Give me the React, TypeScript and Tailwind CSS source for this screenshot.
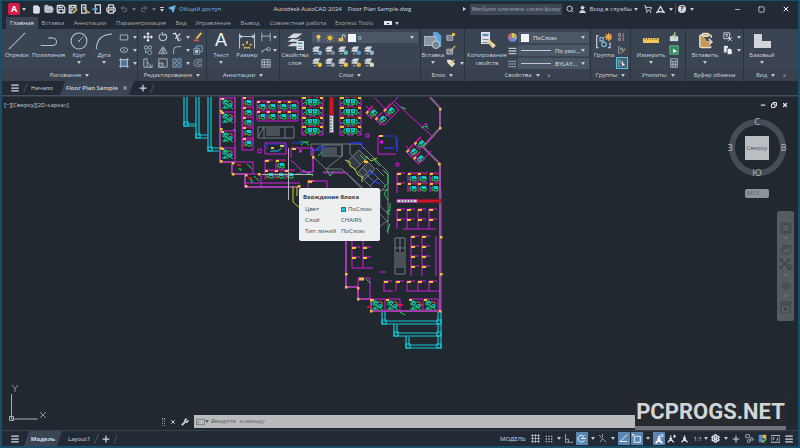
import type { ReactNode } from "react";
import {
  ClipboardPaste,
  FilePlus,
  FolderOpen,
  Menu,
  Minus,
  Plus,
  Printer,
  Redo2,
  Save,
  Search,
  Send,
  Settings,
  ShoppingCart,
  Square,
  Undo2,
  User,
  Wrench,
  X,
} from "lucide-react";

const M = "#d61be0";
const G = "#16d45b";
const C = "#12c8d8";
const Y = "#f2c230";
const R = "#d01424";
const GR = "#727a82";
const B = "#2438d8";

function Caret({ className = "" }: { className?: string }) {
  return (
    <svg viewBox="0 0 4 3" className={`h-[3px] w-1 shrink-0 fill-[#c3c9d1] ${className}`}>
      <path d="M0 0h4L2 3z" />
    </svg>
  );
}

function Glyph({ children, className = "h-3 w-3" }: { children: ReactNode; className?: string }) {
  return (
    <svg viewBox="0 0 12 12" className={`shrink-0 ${className}`} fill="none" stroke="#b9c2cc" strokeWidth="1">
      {children}
    </svg>
  );
}

function Tool({ label, children, className = "" }: { label: string; children: ReactNode; className?: string }) {
  return (
    <button type="button" aria-label={label} className={`flex items-center justify-center ${className}`}>
      {children}
    </button>
  );
}

function BigTool({
  icon,
  label,
  caret = true,
  className,
}: {
  icon: ReactNode;
  label: ReactNode;
  caret?: boolean;
  className: string;
}) {
  return (
    <button type="button" className={`flex shrink-0 flex-col items-center pt-0.5 leading-2 ${className}`}>
      <span className="flex h-[19px] items-center justify-center">{icon}</span>
      <span className="mt-px whitespace-nowrap">{label}</span>
      {caret && <Caret className="mt-0.5" />}
    </button>
  );
}

function Panel({
  title,
  className,
  arrow = true,
  more = false,
  children,
}: {
  title: string;
  className: string;
  arrow?: boolean;
  more?: boolean;
  children: ReactNode;
}) {
  return (
    <section className={`flex flex-col border-r border-[#2a323e] bg-[#3b4453] ${className}`}>
      <div className="flex h-10 items-start">{children}</div>
      <div className="flex h-3 items-center justify-center gap-1 bg-[#39414f] leading-2">
        <span className="whitespace-nowrap">{title}</span>
        {arrow && <Caret />}
        {more && <span className="pl-1">»</span>}
      </div>
    </section>
  );
}

/* ---------- title bar ---------- */

function TitleBar() {
  return (
    <header className="flex h-4 items-center bg-[#222a35] pl-1.5">
      <button type="button" aria-label="Меню приложения" className="flex items-center gap-0.5">
        <span className="flex h-3 w-3 items-center justify-center rounded-xs bg-[#d81b4a] text-[9px] font-bold text-white">
          A
        </span>
        <Caret />
      </button>
      <div className="ml-1.5 flex items-center gap-0.5 text-[#d9dde2]">
        <Tool label="Создать"><FilePlus className="h-[9px] w-[9px] fill-[#d9dde2]" /></Tool>
        <Tool label="Открыть" className="ml-px"><FolderOpen className="h-2.5 w-2.5 fill-[#aeb6c0]" /></Tool>
        <Tool label="Сохранить"><Save className="h-2.5 w-2.5" strokeWidth={3} /></Tool>
        <Tool label="Сохранить как">
          <Glyph className="h-2.5 w-2.5">
            <path d="M1.500 1.500h8v5M1.500 1.500v9h4M3.500 1.500v3h4v-3M3.500 10V7h3" stroke="#d9dde2" strokeWidth="1.500" />
            <path d="M6 11l5-5" stroke="#e8b35c" strokeWidth="2" />
          </Glyph>
        </Tool>
        <Tool label="Открыть из облака">
          <Glyph className="h-2.5 w-2.5">
            <path d="M2 1h5v10H2zM4 4h2M4 6h3" stroke="#d9dde2" strokeWidth="1.500" />
            <path d="M6 10h6M8 7v4" stroke="#c8a96b" strokeWidth="2" />
          </Glyph>
        </Tool>
        <Tool label="Сохранить в облако">
          <Glyph className="h-2.5 w-2.5">
            <path d="M4 1h6v10H4z" stroke="#d9dde2" strokeWidth="1.500" />
            <path d="M0 6h6M4 4l2 2-2 2" stroke="#5fb2e8" strokeWidth="1.500" />
          </Glyph>
        </Tool>
        <Tool label="Печать" className="ml-0.5"><Printer className="h-2.5 w-2.5" strokeWidth={3} /></Tool>
      </div>
      <div className="ml-1 flex items-center gap-1 text-[#69727e]">
        <Tool label="Отменить"><Undo2 className="h-2 w-2" strokeWidth={3} /></Tool>
        <Caret className="opacity-50" />
        <Tool label="Повторить"><Redo2 className="h-2 w-2" strokeWidth={3} /></Tool>
        <Caret className="opacity-50" />
        <span className="flex flex-col items-center gap-px">
          <span className="h-px w-1 bg-[#c3c9d1]" />
          <Caret />
        </span>
      </div>
      <button type="button" className="ml-1 flex items-center gap-[3px] text-[#6fb8ea]">
        <Send className="h-2 w-2 fill-[#6fb8ea]" />
        Общий доступ
      </button>
      <h1 className="ml-auto flex gap-1.5 text-[#d5dae0]">
        <span>Autodesk AutoCAD 2024</span>
        <span>Floor Plan Sample.dwg</span>
      </h1>
      <div className="ml-auto flex items-center">
        <svg viewBox="0 0 3 4" className="mr-1 h-1 w-[3px] fill-[#d5dae0]"><path d="M0 0v4l3-2z" /></svg>
        <input
          aria-label="Поиск"
          placeholder="Введите ключевое слово/фразу"
          className="h-[11px] w-[92px] bg-[#3d4654] px-px italic placeholder:text-[#98a1ad]"
        />
        <Tool label="Найти" className="ml-1"><Search className="h-2 w-2 text-[#c3c9d1]" strokeWidth={3} /></Tool>
        <button type="button" className="ml-1 flex items-center gap-0.5 text-[#d5dae0]">
          <User className="h-[9px] w-[9px] fill-[#d5dae0]" />
          Вход в службы
          <Caret />
        </button>
        <Tool label="Магазин приложений" className="ml-1.5"><ShoppingCart className="h-2 w-2 text-[#c3c9d1]" strokeWidth={3} /></Tool>
        <Tool label="Autodesk" className="ml-1 gap-1">
          <Glyph className="h-[9px] w-[9px]"><path d="M6 2L2 9h8zM0 10l4-1M12 10l-4-1" stroke="#d5dae0" strokeWidth="1.800" /></Glyph>
          <Caret />
        </Tool>
        <span className="mx-0.5 h-2.5 w-px bg-[#4a5361]" />
        <Tool label="Справка" className="gap-1">
          <span className="flex h-2 w-2 items-center justify-center rounded-full bg-[#d5dae0] text-[7px] font-bold text-[#222a35]">?</span>
          <Caret />
        </Tool>
        <div className="ml-8 flex text-[#c3c9d1]">
          <Tool label="Свернуть" className="w-6"><Minus className="h-[7px] w-[7px]" strokeWidth={3} /></Tool>
          <Tool label="Развернуть" className="w-6"><Square className="h-[7px] w-[7px]" strokeWidth={3} /></Tool>
          <Tool label="Закрыть" className="w-6"><X className="h-2 w-2 text-white" strokeWidth={3} /></Tool>
        </div>
      </div>
    </header>
  );
}

const TABS = [
  { name: "Вставка", cls: "w-[30px]" },
  { name: "Аннотации", cls: "w-11" },
  { name: "Параметризация", cls: "w-[58px]" },
  { name: "Вид", cls: "w-[22px]" },
  { name: "Управление", cls: "w-[42px]" },
  { name: "Вывод", cls: "w-8" },
  { name: "Совместная работа", cls: "w-16" },
  { name: "Express Tools", cls: "w-12" },
];

function RibbonTabs() {
  return (
    <nav className="flex h-3 items-center bg-[#222a35] pl-1 text-[#a3acb8]">
      <button type="button" className="flex h-full w-8 items-center justify-center bg-[#3b4453] text-[#e1e5ea]">
        Главная
      </button>
      {TABS.map((t) => (
        <button key={t.name} type="button" className={`whitespace-nowrap ${t.cls}`}>
          {t.name}
        </button>
      ))}
      <Tool label="Вид ленты" className="ml-1.5 gap-[3px]">
        <span className="flex h-1 w-2 items-center justify-center bg-[#e1e5ea]">
          <span className="h-px w-0.5 bg-[#222a35]" />
        </span>
        <Caret />
      </Tool>
    </nav>
  );
}

/* ---------- ribbon ---------- */

const STEEL = "#7fb2d6";

const DRAW_SMALL = [
  { name: "Прямоугольник", el: <path d="M1.500 3.500h9v6h-9z" /> },
  { name: "Эллипс", el: <><ellipse cx="6" cy="6" rx="4.500" ry="2.800" /><path d="M5 6h2" /></> },
  { name: "Штриховка", el: <><path d="M2 2h8v8H2z" fill="#4c7396" stroke={STEEL} /><path d="M0 2h12M0 10h12M2 0v12M10 0v12" /></> },
];

const EDIT_SMALL = [
  { name: "Перенести", el: <path d="M6 1v10M1 6h10M4.500 2.500L6 1l1.500 1.500M4.500 9.500L6 11l1.500-1.500M2.500 4.500L1 6l1.500 1.500M9.500 4.500L11 6 9.500 7.500" stroke="#e4e8ec" strokeWidth="1.300" /> },
  { name: "Повернуть", el: <path d="M9 2.500A4.500 4.500 0 1 1 4 2M7 0v3.500H3.500" strokeWidth="1.400" transform="matrix(-1 0 0 1 12 0)" /> },
  { name: "Обрезать", caret: true, el: <><path d="M4 1l4 10M10 2L4 8M1 2h4" stroke="#dfe3e8" strokeWidth="1.400" /><circle cx="9" cy="9" r="1.500" /></> },
  { name: "Стереть", el: <><path d="M4 8l6-7" stroke="#f0b552" strokeWidth="2.500" /><path d="M1 10h6" stroke="#e05a5a" strokeWidth="2" /></> },
  { name: "Копировать", el: <><circle cx="3.500" cy="3" r="2" /><circle cx="8.500" cy="3" r="2" /><circle cx="8" cy="9" r="2.500" stroke={STEEL} /><path d="M3 6v3h2" /></> },
  { name: "Зеркало", el: <><path d="M5 3v7H1zM7 3v7h4z" /><path d="M6 1v11" stroke={STEEL} /></> },
  { name: "Сопряжение", caret: true, el: <path d="M2 11V6a4 4 0 0 1 4-4h5" /> },
  { name: "Расчленить", el: <><path d="M1 4h7v7H1zM4 4V1h7v7H8" stroke={STEEL} /><path d="M3 6h3v3H3z" fill="#b9c2cc" /></> },
  { name: "Растянуть", el: <><path d="M1 1v10h4V1zM5 5l6 6H5" /><path d="M7 11h4V8" stroke={STEEL} /></> },
  { name: "Масштаб", el: <><path d="M1 1h10v10H1z" /><path d="M1 6h5v5H1z" fill="#55606e" /></> },
  { name: "Массив", caret: true, el: <path d="M1 1h4v4H1zM7 1h4v4H7zM1 7h4v4H1zM7 7h4v4H7z" stroke={STEEL} /> },
  { name: "Смещение", el: <path d="M11 2H5a4 4 0 0 0 0 8h6M11 4.500H6a1.500 1.500 0 0 0 0 3h5" stroke="#9aa5b2" /> },
];

const LAYER_MARKS = [STEEL, "#7a8694", "#5bc0c8", "#4f9ed6", "#8fb8d8", Y, "#9aa5b2", Y, "#e0a63c", "#e3d9b0"];

function Stack({ mark }: { mark: string }) {
  return (
    <Glyph className="h-[11px] w-[11px]">
      <path d="M0 4.500l3-3h6l-2 3zM0 7l2-2h6L6 7.500z" fill="#d3d8de" stroke="none" />
      <circle cx="8.500" cy="8.500" r="2.500" fill={mark} stroke="none" />
      <path d="M2 9.500h3" />
    </Glyph>
  );
}

function PropSelect({ label, value, lead }: { label: string; value: string; lead: ReactNode }) {
  return (
    <label className="relative flex h-[11px] items-center gap-1 bg-[#4b5767] pl-[3px]">
      {lead}
      <select aria-label={label} className="min-w-0 flex-1 appearance-none pr-2 text-[#e1e5ea]" defaultValue={value}>
        <option>{value}</option>
      </select>
      <Caret className="pointer-events-none absolute right-1" />
    </label>
  );
}

function Ribbon() {
  return (
    <div className="flex h-[52px] text-[#d0d6dd]">
      <Panel title="Рисование" className="w-[136px]">
        <BigTool
          className="ml-px w-7"
          caret={false}
          label="Отрезок"
          icon={<Glyph className="h-[18px] w-[18px]"><path d="M1 11L11 1" strokeWidth="0.700" /><path d="M.5 11h1M10.500 1h1" stroke={STEEL} /></Glyph>}
        />
        <BigTool
          className="w-[35px]"
          caret={false}
          label="Полилиния"
          icon={<Glyph className="h-[18px] w-[18px]"><path d="M1 9h7.500a2.500 2.500 0 0 0 0-5H7" strokeWidth="0.700" /><path d="M.5 9h1M5.500 4h2" stroke={STEEL} /></Glyph>}
        />
        <BigTool
          className="w-[26px]"
          label="Круг"
          icon={<Glyph className="h-[18px] w-[18px]"><circle cx="6" cy="6" r="5.300" strokeWidth="0.700" /><path d="M6 6l3-3" strokeWidth="0.600" stroke={STEEL} /><path d="M5.500 6h1" /></Glyph>}
        />
        <BigTool
          className="w-6"
          label="Дуга"
          icon={<Glyph className="h-[18px] w-[18px]"><path d="M1 11C1 5 5 1.500 11 1.500" strokeWidth="0.700" /><path d="M.5 11h1M3 4.500h1M10 1.500h1" stroke={STEEL} /></Glyph>}
        />
        <div className="flex flex-col gap-px pt-0.5 pl-[3px]">
          {DRAW_SMALL.map((t) => (
            <Tool key={t.name} label={t.name} className="h-3 gap-1">
              <Glyph className="h-2.5 w-2.5">{t.el}</Glyph>
              <Caret />
            </Tool>
          ))}
        </div>
      </Panel>

      <Panel title="Редактирование" className="w-[69px]">
        <div className="grid grid-cols-[15px_15px_22px_12px] gap-y-px pt-0.5 pl-0.5">
          {EDIT_SMALL.map((t) => (
            <Tool key={t.name} label={t.name} className="h-3 gap-1">
              <Glyph className="h-2.5 w-2.5">{t.el}</Glyph>
              {t.caret && <Caret />}
            </Tool>
          ))}
        </div>
      </Panel>

      <Panel title="Аннотации" className="w-[73px]">
        <BigTool
          className="w-7"
          label="Текст"
          icon={<span className="font-['Liberation_Sans',sans-serif] text-[18px] leading-[17px] text-[#eef1f4]">A</span>}
        />
        <BigTool
          className="w-6"
          caret={false}
          label="Размер"
          icon={
            <Glyph className="h-[18px] w-[18px]">
              <path d="M1 1v10M11 1v10M1 3h10M2.500 2L1 3l1.500 1M9.500 2l1.500 1-1.500 1" strokeWidth="0.700" />
              <path d="M6 8v-2M4 9L3 8M8 9l1-1M6 10v1M4 11l1-1M8 11L7 10" stroke={Y} />
            </Glyph>
          }
        />
        <div className="flex flex-col gap-px pt-0.5 pl-0.5">
          <Tool label="Линейный" className="h-3 gap-0.5">
            <Glyph className="h-2.5 w-2.5"><path d="M1 1v10M11 1v10M1 5h10" /></Glyph><Caret />
          </Tool>
          <Tool label="Выноска" className="h-3 gap-0.5">
            <Glyph className="h-2.5 w-2.5"><path d="M1 9l4-4h3M1 9l1-3" /><circle cx="9" cy="5" r="2" /></Glyph><Caret />
          </Tool>
          <Tool label="Таблица" className="h-3 self-start">
            <Glyph className="h-2.5 w-2.5"><path d="M1 2h10v9H1zM1 5h10M1 8h10M4 2v9M8 2v9" /></Glyph>
          </Tool>
        </div>
      </Panel>

      <Panel title="Слои" className="w-[141px]">
        <BigTool
          className="ml-px w-7"
          caret={false}
          label={<>Свойства<br />слоя</>}
          icon={
            <Glyph className="h-[18px] w-[18px]">
              <path d="M1 4l4-3h6L7 4zM1 6.500l3-2 3 .5 3-1-3 2.500zM1 9.500l3-2h3l2-.5-2 2.500z" fill="#d6dbe0" stroke="none" />
              <path d="M7 6h5v6H7z" fill="#dfe3e8" stroke="none" />
              <path d="M8 7.500h3" stroke="#4a90c8" />
              <path d="M8 9.500h3M8 11h3" stroke="#7b8591" strokeWidth="0.600" />
            </Glyph>
          }
        />
        <div className="flex flex-1 flex-col gap-px pt-[3px] pr-0.5 pl-[3px]">
          <PropSelect
            label="Слой"
            value="0"
            lead={
              <>
                <Glyph className="h-2.5 w-[7px]"><circle cx="6" cy="4" r="3.500" fill="#f3c94b" stroke="none" /><path d="M4 9h4M4.500 11h3" stroke="#e1e5ea" /></Glyph>
                <Glyph className="h-2.5 w-2"><circle cx="6" cy="6" r="3" fill={Y} stroke="none" /><path d="M6 0v12M0 6h12M2 2l8 8M10 2l-8 8" stroke={Y} /></Glyph>
                <Glyph className="h-2.5 w-2"><path d="M1 6h7v5H1z" fill="#f0b94a" stroke="none" /><path d="M6.500 6V3a2 2 0 0 1 4 0v2" stroke="#d5dae0" strokeWidth="1.500" /></Glyph>
                <span className="-mx-0.5 h-2 w-2 bg-[#f2f4f6]" />
              </>
            }
          />
          <div className="grid grid-cols-5 gap-x-0.5 self-start">
            {LAYER_MARKS.map((c, i) => (
              <Tool key={i} label={`Инструмент слоя ${i + 1}`} className="h-3">
                <Stack mark={c} />
              </Tool>
            ))}
          </div>
        </div>
      </Panel>

      <Panel title="Блок" className="w-11">
        <BigTool
          className="w-6"
          label="Вставка"
          icon={
            <Glyph className="h-[18px] w-[18px]">
              <path d="M6 0h3l2.500 2.500V10H6z" fill="#5ba3dc" stroke="none" />
              <path d="M0 3h8v6H0z" fill="#8b95a1" stroke="#cdd3da" strokeWidth="0.500" />
              <circle cx="8" cy="8.500" r="2.500" fill="#76818e" stroke="#cdd3da" strokeWidth="0.600" />
            </Glyph>
          }
        />
        <div className="flex flex-col gap-px pt-0.5 pl-px">
          <Tool label="Создать блок" className="h-3 self-start"><Glyph className="h-2.5 w-2.5"><path d="M1 4h7v6H1z" fill="#77828f" /><circle cx="9" cy="3" r="2" fill={Y} stroke="none" /></Glyph></Tool>
          <Tool label="Редактор блоков" className="h-3 self-start"><Glyph className="h-2.5 w-2.5"><path d="M1 5h7v6H1z" fill="#77828f" /><path d="M5 8l6-7" stroke="#e8b35c" strokeWidth="1.500" /></Glyph></Tool>
          <Tool label="Атрибуты" className="h-3 gap-1"><Glyph className="h-2.5 w-2.5"><path d="M1 2h5l5 5-4 4-5-5z" fill="#dfe3e8" stroke="none" /><path d="M5 8l5-6" stroke={Y} strokeWidth="1.500" /></Glyph><Caret /></Tool>
        </div>
      </Panel>

      <Panel title="Свойства" className="w-[126px]" more>
        <BigTool
          className="ml-0.5 w-10"
          caret={false}
          label={<>Копирование<br />свойств</>}
          icon={
            <Glyph className="h-[18px] w-[18px]">
              <path d="M2 0h6v8H2z" fill="#dfe3e8" stroke="none" />
              <path d="M3 2h4" stroke="#4a90c8" strokeWidth="1.500" />
              <path d="M3 5h4M3 7h4" stroke="#7b8591" strokeWidth="0.800" />
              <path d="M7 6l4 4" stroke="#e8c983" strokeWidth="2.500" />
              <path d="M9 10l2-2" stroke="#dfe3e8" />
            </Glyph>
          }
        />
        <div className="flex w-3 flex-col items-center gap-[5px] pt-1">
          <span className="h-[9px] w-[9px] rounded-full bg-conic from-[#e8c43c] via-[#5c7fe0] to-[#e05a4a]" />
          <Glyph className="h-2 w-[9px]"><path d="M0 2h12M0 6h12M0 10h12" strokeWidth="2" /></Glyph>
          <Glyph className="h-2 w-[9px]"><path d="M0 2h12M0 6h12M0 10h12" strokeWidth="1.500" strokeDasharray="3 1" /></Glyph>
        </div>
        <div className="flex flex-1 flex-col gap-0.5 pt-[3px] pr-px">
          <PropSelect label="Цвет" value="ПоСлою" lead={<span className="h-2 w-2 bg-[#f2f4f6]" />} />
          <PropSelect label="Вес линий" value="По умо..." lead={<span className="h-px w-[30px] bg-[#c3c9d1]" />} />
          <PropSelect label="Тип линий" value="BYLAY..." lead={<span className="h-px w-[30px] bg-[#c3c9d1]" />} />
        </div>
      </Panel>

      <Panel title="Группы" className="w-10">
        <BigTool
          className="ml-px w-6"
          caret={false}
          label="Группа"
          icon={
            <Glyph className="h-4 w-4">
              <path d="M2 2H.5v9H2M9 2h1.500M9 11h1.500V7" />
              <path d="M3 3.500h2.500V6H3z" stroke={STEEL} />
              <circle cx="6" cy="8.500" r="1.700" stroke={STEEL} />
              <path d="M9.500 0v6M6.500 3h6M7.500 1l4 4M11.500 1l-4 4" stroke="#f0a848" />
            </Glyph>
          }
        />
        <div className="flex flex-col gap-px pt-0.5">
          <Tool label="Разгруппировать" className="h-3 w-3"><Glyph className="h-2 w-2"><path d="M1 1h3v4H1zM1 8h3v3H1z" /><path d="M8 0v12" stroke="#d9534f" strokeWidth="2" /></Glyph></Tool>
          <Tool label="Редактировать группу" className="h-3 w-3"><Glyph className="h-2 w-2"><path d="M3 1H1v10h2M4 3h3v3H4z" /><path d="M5 11l6-7" stroke="#e8b35c" strokeWidth="1.500" /></Glyph></Tool>
          <Tool label="Выбор группы" className="h-3 w-3 border border-[#58c4dc] bg-[#3c6577]"><Glyph className="h-2 w-2"><path d="M3 1H1v10h2M4 3h3v3H4z" /><path d="M6 5v6l2-1.500 3 0z" fill="#fff" stroke="none" /></Glyph></Tool>
        </div>
      </Panel>

      <Panel title="Утилиты" className="w-[55px]">
        <BigTool
          className="ml-1 w-8"
          label="Измерить"
          icon={
            <svg viewBox="0 0 16 5" className="h-[5px] w-4">
              <path d="M0 0h16v5H0z" fill="#efc95a" />
              <path d="M2 0v2M4.500 0v2M7 0v2M9.500 0v2M12 0v2M14 0v2" stroke="#6c5720" strokeWidth="0.700" />
            </svg>
          }
        />
        <div className="flex flex-col gap-px pt-0.5 pl-0.5">
          <Tool label="Базовая точка" className="h-3"><Glyph className="h-2.5 w-2.5"><path d="M1 5h10v6H1z" fill="#d5dae0" stroke="none" /><path d="M7 0v8M4 4h3" stroke="#9fd08c" strokeWidth="1.500" /></Glyph></Tool>
          <Tool label="Быстрый выбор" className="h-3"><Glyph className="h-2.5 w-2.5"><path d="M1 1h10v10H1z" fill="#2f8a5c" stroke="#67c590" /><path d="M5 4v6l2-1.500h3z" fill="#fff" stroke="none" /></Glyph></Tool>
          <Tool label="Калькулятор" className="h-3"><Glyph className="h-2.5 w-2.5"><path d="M2 1h8v10H2zM2 4h8M4.500 4v7M7.500 4v7M2 7.500h8" /></Glyph></Tool>
        </div>
      </Panel>

      <Panel title="Буфер обмена" className="w-[58px]" arrow={false}>
        <BigTool
          className="ml-1 w-[30px]"
          label="Вставить"
          icon={<ClipboardPaste className="h-[17px] w-[17px] fill-[#c89a55] text-[#e6e0d2]" strokeWidth={2} />}
        />
        <div className="flex flex-col gap-px pt-0.5 pl-[3px]">
          <Tool label="Вырезать" className="h-3 gap-1"><Glyph className="h-2.5 w-2.5"><path d="M1 1h7v7H1zM3 3h3M3 5h3" stroke="#dfe3e8" /><path d="M6 6l5 5M11 6l-5 5" stroke="#dfe3e8" /></Glyph><Caret /></Tool>
          <Tool label="Копировать в буфер" className="h-3 gap-1"><Glyph className="h-2.5 w-2.5"><path d="M1 1h5v8H1z" fill="#dfe3e8" stroke="none" /><path d="M5 4h4l2 2v5.500H5z" fill="#f1f3f5" stroke="#3b4453" /></Glyph><Caret /></Tool>
        </div>
      </Panel>

      <Panel title="Вид" className="min-w-0 flex-1 border-r-0" more>
        <BigTool
          className="ml-0.5 w-8"
          label="Базовый"
          icon={<svg viewBox="0 0 17 14" className="h-3.5 w-[17px]"><path d="M0 0h8v7h9v7H0z" fill="#d3d6d9" /></svg>}
        />
      </Panel>
    </div>
  );
}

/* ---------- document tabs ---------- */

function Slash() {
  return <span className="h-2.5 w-px rotate-[20deg] bg-[#4a5361]" />;
}

function FileTabs() {
  return (
    <div className="flex h-[15px] items-center border-b border-[#46505f] bg-[#222a35] pl-2 text-[#d5dae0]">
      <Tool label="Список файлов"><Menu className="h-2.5 w-2.5" strokeWidth={3} /></Tool>
      <span className="w-[5px]" />
      <Slash />
      <button type="button" className="mr-0.5 w-8 text-center">Начало</button>
      <div className="flex h-full items-center gap-1 bg-[#3b4453] pr-1.5 pl-1.5 font-semibold [clip-path:polygon(5px_0,100%_0,calc(100%-5px)_100%,0_100%)]">
        <button type="button" className="whitespace-nowrap">Floor Plan Sample</button>
        <Tool label="Закрыть файл"><X className="h-1.5 w-1.5" strokeWidth={3} /></Tool>
      </div>
      <Tool label="Новый чертеж" className="mx-1"><Plus className="h-2.5 w-2.5" strokeWidth={3} /></Tool>
      <Slash />
    </div>
  );
}

/* ---------- floor plan ---------- */

// workstation with furniture: partition, tag, desk, chair
function Station({ x, y, w = 10, h = 9 }: { x: number; y: number; w?: number; h?: number }) {
  return (
    <g transform={`translate(${x} ${y})`}>
      <path d={`M0 ${h}V0H${w}`} stroke={M} />
      <path d="M5 1h4M1 8h3" stroke={R} />
      <path d="M2 4h6v4H5V7H2z" stroke={G} />
      <path d="M4 3h4v3H4z" fill={C} stroke="none" />
      <path d="M0 0h3v2H0z" fill={Y} stroke="none" />
    </g>
  );
}

// two stations back to back
function DoubleStation({ x, y }: { x: number; y: number }) {
  return (
    <g transform={`translate(${x} ${y})`}>
      <path d="M0 0v9h4M21 0v9h-4M8 9h5" stroke={M} />
      <path d="M5 .5h4M13 .5h4M3 8h2M16 8h2" stroke={R} />
      <path d="M4 3h13v4H4zM3 5l-2 2M18 5l2 2M8 7v2M13 7v2" stroke={G} />
      <path d="M6 2h4v4H6zM11 2h4v4h-4z" fill={C} stroke="none" />
      <path d="M8 4h1M12 4h2" stroke="#1d5a66" />
      <path d="M0 0h4v2H0zM18 0h3v2h-3z" fill={Y} stroke="none" />
    </g>
  );
}

function Cell({ x, y, w = 10, h = 10 }: { x: number; y: number; w?: number; h?: number }) {
  return (
    <g transform={`translate(${x} ${y})`}>
      <path d={`M0 ${h}V0H${w - 2}`} stroke={M} />
      <path d="M0 0h4v2H0z" fill={Y} stroke="none" />
    </g>
  );
}

function Office({ x, y }: { x: number; y: number }) {
  return (
    <g transform={`translate(${x} ${y})`}>
      <path d="M0 0h14v11" stroke={M} />
      <path d="M2 3h9v5H6V6H2zM1 10h7M9 9l3 2M4 1v3" stroke={G} />
      <circle cx="5" cy="4" r="1.500" stroke={C} />
      <circle cx="9" cy="7" r="1.500" stroke={C} />
      <circle cx="4" cy="9" r="1" stroke={C} />
      <path d="M8 3h3v2" stroke={R} />
      <path d="M0 0h3v2H0z" fill={Y} stroke="none" />
    </g>
  );
}

const STATIONS = [
  ...[101, 111].flatMap((y) => [[257, y], [267, y], [278, y], [288, y]]),
  ...[97, 107, 117, 127, 138].map((y) => [243, y]),
  [276, 160], [265, 170], [275, 170], [285, 170],
  [408, 173], [418, 173], [430, 173], [408, 183], [418, 183], [430, 183],
];

const DOUBLES = [97, 107, 117, 126].flatMap((y) => [[302, y], [340, y]]);

const CELLS = [
  ...[209, 219].flatMap((y) => [397, 407, 418, 429].map((x) => [x, y])),
  ...[236, 246, 256, 266].flatMap((y) => [[411, y], [422, y]]),
  ...[237, 247, 257].flatMap((y) => [[352, y], [363, y]]),
  ...[384, 396, 407, 418, 429].map((x) => [x, 281]),
  [397, 173], [397, 183], [265, 160], [308, 181],
];

const OFFICES = [[221, 98], [221, 112], [221, 131], [221, 148], [371, 299], [386, 299], [409, 299], [424, 299]];

const DOTS = [
  [220, 110], [220, 128], [220, 147], [220, 160], [232, 162], [232, 173], [245, 174], [245, 185], [298, 185],
  [439, 108], [439, 127], [438, 163], [440, 236], [440, 273], [345, 273], [345, 286], [357, 287], [357, 298],
  [370, 299], [370, 310], [439, 310], [312, 156], [258, 173],
];

function FloorPlan() {
  return (
    <svg viewBox="175 97 275 258" className="absolute top-0 left-[173px] h-[258px] w-[275px]" fill="none" strokeWidth="1">
      {/* terraces */}
      <g stroke={C} strokeWidth="1.200">
        <path d="M184 97v29h12M187 97v27h9M196 97v41h12M199 97v38h9M208 97v54h12M211 97v51h9" />
        <path d="M184 122h4v4h-4zM196 134h4v4h-4zM208 147h4v4h-4z" />
        <path d="M382 311v13h59V311M385 312v9h53V311M394 324v12h47V324M397 325v8h41v-9M406 336v12h35V336M409 337v8h29v-9" />
        <path d="M382 320h4v4h-4zM394 332h4v4h-4zM406 344h4v4h-4zM437 320h4v4h-4zM437 332h4v4h-4zM437 344h4v4h-4z" />
      </g>

      {/* outer walls */}
      <path d="M220 97v65h12v12h13v13h55M346 241v46h12v12h13v12h70" stroke="#6d5a78" strokeWidth="2" />
      <path d="M220 97v65h12v12h13v13h55M346 241v46h12v12h13v12h70" stroke={M} />
      <path d="M430 97l10 11v20l-17 19 17 17v147" stroke="#6d6a78" strokeWidth="2" />
      <path d="M430 97l10 11v20l-17 19 17 17v28" stroke="#c43acb" />
      <path d="M441 190v120M395 102l37 34-10 12" stroke={M} />
      <path d="M235 97v65M232 162h21v12M245 174h16v13M245 183h55M242 97v53M253 97v53M242 140h11M242 150h11" stroke={M} />
      <path d="M298 101v20M257 121h41" stroke={M} />

      {/* vertical and horizontal shelving */}
      <path d="M329.500 97h4v18h-4z" fill={R} stroke="#8a1626" />
      <path d="M329.500 115.500h4v17h-4z" fill="#d9dde2" stroke="#b03ab8" />
      <path d="M331 117v14" stroke="#4a5058" strokeDasharray="2 1" />
      <path d="M417 199.500h24v3h-24z" fill={R} stroke="#8a1626" />
      <path d="M397 199.500h20v3h-20z" fill="#d9dde2" stroke="#b03ab8" />
      <path d="M400 201h14" stroke="#4a5058" strokeDasharray="2 1" />

      {/* stairs and service core */}
      <g stroke={GR}>
        <path d="M258 127h36v11h-36zM264 127v11M285 127v11M266 129h14M266 131h14M266 133h14M266 135h14M258 137l6-10" />
        <path d="M311 144h49l28 28v62M311 144v11l15 14h16l20 20M342 144v12l-16 13M322 145h20v11h-20z" />
        <path d="M324 147v8M326 147v8M328 147v8M330 147v8M332 147v8M334 147v8M336 147v8M350 144v10l10 10M323 172h22l18 16" />
        <path d="M347 162l12-12 8 8-12 12zM358 172l10-10 7 7-10 10zM352 156l8 8M363 168l5 5" fill="#343b44" />
        <path d="M362 178l8-8 8 8-8 8zM370 186l8-8 8 8-8 8zM366 174l8 8M376 168l8 8M380 190h8M380 190v16l8 8M376 210l12 12M378 228l10-8" />
        <path d="M395 238h10v36H395zM400 238v14M395 248h10M396 253h8M396 255h8M396 257h8M396 259h8M396 261h8M396 263h8M396 265h8M396 267h8" />
      </g>
      <path d="M345 160l5 2v4l5 3 3 6 4 2v5M366 156l5 5 6-3M293 186v16l7 6M297 186v10" stroke="#c9cf28" />
      <path d="M364 160l4 1v2h-4z" fill={Y} />
      <path d="M383 170l5 5v8l-4 4M388 188l-4 6 4 6M327 170l3 6 4-5M372 158l8 8M390 224l-3 8M390 203v8h-3l3 4" stroke={G} />
      <path d="M300 142h9M301 145l4-3 4 3M316 150l5-4M318 156l4-4M313 176l-5-4M303 170l6 4M360 155l6 6" stroke={G} />
      <path d="M350 143h12v6M318 147h8M368 172l8 3M372 180l8 4M384 148h10M397 138v14M310 150h12" stroke={B} strokeWidth="1.500" />

      {/* meeting rooms */}
      <path d="M265 143h21v11h-21z" stroke={M} />
      <path d="M267 150v-6h18v5" stroke={B} />
      <path d="M270 151h8l4-3" stroke={C} />
      <path d="M271 148h3M280 146h4" stroke={Y} strokeWidth="2" />
      <path d="M258 149h3v4h-3zM366 134h3v3h-3zM396 163h3v3h-3z" stroke={M} />
      <path d="M291 158v-10h22v24h-10l-12-12M313 148v24M300 172h13M323 173h25M307 181h20v8M378 136v18h18M378 136h6" stroke={M} />
      <path d="M299 151h3M380 142h3" stroke={M} strokeWidth="3" />
      <path d="M292 143h12M384 136h12v12" stroke={B} />
      <path d="M379 136h4M292 149h4M308 181h5" stroke={Y} strokeWidth="2" />
      <path d="M237 165h4M248 178h4M367 307h4M397 305h6M419 305h4" stroke={R} strokeWidth="2" />
      <path d="M238 169h3v2M250 180h2v3M233 130h3M254 176l5 5M247 164l5 5M296 174h5M400 312l5 3M366 279l5 5" stroke={G} />
      <path d="M358 299v-21h12v21M345 274h3M380 272h6M440 274h3" stroke={M} />
      <path d="M359 279h5" stroke={Y} strokeWidth="3" />

      {STATIONS.map(([x, y]) => <Station key={`${x}-${y}`} x={x} y={y} />)}
      {DOUBLES.map(([x, y]) => <DoubleStation key={`${x}-${y}`} x={x} y={y} />)}
      {CELLS.map(([x, y]) => <Cell key={`${x}-${y}`} x={x} y={y} />)}
      {OFFICES.map(([x, y]) => <Office key={`${x}-${y}`} x={x} y={y} />)}

      {/* angled workstations */}
      <path d="M366 106l18 19 15-15-7-7M384 118l7-7M398 97l-12 13-11-12" stroke={M} />
      <g transform="rotate(-45 382 112)">
        <Station x={370} y={101} />
        <Station x={372} y={112} />
        <Station x={384} y={112} />
      </g>
      <g transform="rotate(-45 416 150)">
        <Station x={408} y={144} />
        <Station x={408} y={154} />
        <Station x={419} y={144} />
      </g>
      <path d="M406 146l15 16 10-11M421 128l5-5 2 4" stroke={M} />
      <path d="M422 128l4-2 2 3M401 107l5 2" stroke={G} />
      <path d="M403 229h33M373 268h-21M436 236v40M383 291h10M407 291h32" stroke={M} />
      {DOTS.map(([x, y]) => <path key={`${x}-${y}`} d={`M${x} ${y}h2.500v2.500h-2.500z`} fill={Y} />)}

      {/* crosshair */}
      <path d="M288.500 148v52M262 174.500h51" stroke="#aeb4ba" />
    </svg>
  );
}

const PROPS = [
  { name: "Цвет", value: "ПоСлою", swatch: true },
  { name: "Слой", value: "CHAIRS" },
  { name: "Тип линий", value: "ПоСлою" },
];

function BlockTooltip() {
  return (
    <div role="tooltip" className="absolute top-[91px] left-[297px] h-[53px] w-[81px] rounded-xs bg-[#eeeff0] px-1 pt-1 text-[#42474d]">
      <strong className="block leading-[10px] text-[#33383d]">Вхождение блока</strong>
      <dl className="mt-0.5 grid grid-cols-[38px_1fr] leading-[11px]">
        {PROPS.map((p) => (
          <div key={p.name} className="contents">
            <dt className="pl-0.5 whitespace-nowrap">{p.name}</dt>
            <dd className="flex items-center gap-0.5">
              {p.swatch && <span className="h-[5px] w-[5px] border border-[#33777e] bg-[#22c5cf]" />}
              {p.value}
            </dd>
          </div>
        ))}
      </dl>
    </div>
  );
}

function ViewCube() {
  return (
    <div className="absolute top-[21px] right-2.5 flex w-[62px] flex-col items-center gap-3">
      <div className="relative flex h-[59px] w-[59px] items-center justify-center">
        <svg viewBox="0 0 59 59" className="absolute inset-0" fill="none">
          <circle cx="29.500" cy="29.500" r="25.500" stroke="#454d57" strokeWidth="6" />
        </svg>
        <button type="button" className="relative flex h-6 w-6 items-center justify-center bg-[#babdc1] text-[#50565e]">
          Сверху
        </button>
        <span className="absolute -top-px text-[9px] leading-[10px] text-[#b4bac1]">С</span>
        <span className="absolute -bottom-px text-[9px] leading-[10px] text-[#b4bac1]">Ю</span>
        <span className="absolute left-0 text-[9px] leading-[10px] text-[#b4bac1]">З</span>
        <span className="absolute right-0 text-[9px] leading-[10px] text-[#b4bac1]">В</span>
      </div>
      <button type="button" className="h-[9px] w-6 rounded-xs bg-[#8e949e] pl-0.5 text-left leading-[9px] text-[#5d646e]">
        МСК
      </button>
    </div>
  );
}

function NavBar() {
  return (
    <div className="absolute top-[114px] right-1 flex h-[110px] w-[17px] flex-col items-center justify-between rounded-xs bg-[#535c5f] py-1">
      <X className="h-1 w-1 self-end text-[#353c42]" />
      <Glyph className="h-3 w-3"><g stroke="#3c4449"><circle cx="6" cy="6" r="4" /><path d="M1 1h10v10H1z" /></g></Glyph>
      <Caret className="opacity-20" />
      <Glyph className="h-3 w-3"><path d="M3 11L1 8V6l2 1V2h1.500v4M5 2h1.500v4M7.500 2.500H9V6M10 3h1v5L9 11H3" stroke="#3c4449" /></Glyph>
      <Glyph className="h-3.5 w-3.5"><path d="M1 1l8 8M9 1L1 9M1 3V1h2M7 1h2v2M1 7v2h2" stroke="#3c4449" /><circle cx="9" cy="8" r="2" stroke="#3c4449" /></Glyph>
      <Caret className="opacity-20" />
      <Glyph className="h-3 w-3"><path d="M6 1v10M4 3L1 6l3 3zM8 3l3 3-3 3z" stroke="#3c4449" /></Glyph>
      <Caret className="opacity-20" />
      <Glyph className="h-3 w-3"><path d="M1 1h10v2H1zM1 4h9v8H1z" stroke="#3c4449" /><path d="M4 6l4 2-4 2z" fill="#3c4449" stroke="none" /></Glyph>
      <span className="h-px w-px" />
    </div>
  );
}

function Canvas() {
  return (
    <main className="relative min-h-[330px] flex-1 overflow-hidden border-t border-[#303946] bg-[#212830]">
      <div className="flex items-center justify-between pt-[3px] pr-2.5 pl-0.5 text-[#c3c9d1]">
        <span>[−][Сверху][2D-каркас]</span>
        <span className="flex gap-[5px] text-[#e1e5ea]">
          <Tool label="Свернуть вид"><Minus className="h-1.5 w-1.5" strokeWidth={5} /></Tool>
          <Tool label="Восстановить вид"><Glyph className="h-1.5 w-1.5"><path d="M1 4h7v7H1zM4 4V1h7v7H8" stroke="#e1e5ea" strokeWidth="2" /></Glyph></Tool>
          <Tool label="Закрыть вид"><X className="h-1.5 w-1.5" strokeWidth={5} /></Tool>
        </span>
      </div>

      <FloorPlan />
      <BlockTooltip />
      <ViewCube />
      <NavBar />

      {/* UCS icon */}
      <svg viewBox="0 0 42 40" className="absolute bottom-1.5 left-[5px] h-10 w-[42px]" fill="none" stroke="#a9afb6">
        <path d="M4.500 10v25h26M2.500 32.500h4v4h-4z" />
        <path d="M5 1l3 3.500 3-3.500M8 4.500V8M33 28l6 6M39 28l-6 6" strokeWidth="0.800" />
      </svg>

      <form className="absolute right-3.5 bottom-0.5 left-[160px] flex h-[13px] items-center text-[#c3c9d1]">
        <span className="h-2 w-[3px] border-x border-dotted border-[#8a929c]" />
        <Tool label="Закрыть строку" className="ml-1 w-2"><X className="h-1.5 w-1.5" strokeWidth={4} /></Tool>
        <Tool label="Настройка" className="mx-1 w-2"><Wrench className="h-2 w-2 fill-[#c3c9d1]" /></Tool>
        <div className="ml-px flex h-full flex-1 items-center bg-[#b9babc] pl-0.5">
          <Glyph className="h-2 w-[9px]"><path d="M0 2h12v8H0zM2 5l2 1.500L2 8" stroke="#5f666e" /></Glyph>
          <Caret className="brightness-50" />
          <input
            aria-label="Командная строка"
            placeholder="Введите команду"
            className="ml-0.5 h-full flex-1 font-['Liberation_Mono',monospace] italic placeholder:text-[#63686e]"
          />
        </div>
      </form>

      <div className="absolute right-3 bottom-0 flex h-[33px] w-[151px] items-center justify-center border-b-4 border-[#6f7377] bg-[#262a2e] font-['Roboto',sans-serif] text-[22px] font-bold text-[#d2d5d8]">
        PCPROGS.NET
      </div>
    </main>
  );
}

/* ---------- status bar ---------- */

const ON = "h-[13px] bg-[#5b87b5]";

function StatusBar() {
  return (
    <footer className="flex h-4 items-center border-t border-[#39424f] bg-[#222a35] pr-1 pl-2 text-[#d5dae0]">
      <Tool label="Список листов"><Menu className="h-2.5 w-2.5" strokeWidth={3} /></Tool>
      <button type="button" className="ml-1 h-full w-[38px] bg-[#3b4453] font-bold [clip-path:polygon(5px_0,100%_0,calc(100%-5px)_100%,0_100%)]">
        Модель
      </button>
      <button type="button" className="mx-1.5">Layout1</button>
      <Slash />
      <Tool label="Новый лист" className="mx-1"><Plus className="h-2.5 w-2.5" strokeWidth={3} /></Tool>
      <Slash />

      <div className="ml-auto flex items-center gap-[3px]">
        <button type="button">МОДЕЛЬ</button>
        <Tool label="Сетка" className="mx-0.5"><Glyph className="h-[9px] w-[9px]"><path d="M0 2h12M0 6h12M0 10h12M2 0v12M6 0v12M10 0v12" /></Glyph></Tool>
        <Tool label="Шаг" className="gap-1"><Glyph className="h-2 w-2"><path d="M1 2h11M1 6h11M1 10h11" strokeWidth="2" strokeDasharray="2 2" /></Glyph><Caret /></Tool>
        <Tool label="Орто"><Glyph className="h-[9px] w-[9px]"><path d="M2 0v11h10M2 7h4v4" /></Glyph></Tool>
        <Tool label="Полярное отслеживание" className={`w-3 ${ON}`}><Glyph className="h-[9px] w-[9px]"><path d="M10 8a4.500 4.500 0 1 1-1-5M6 6h6M6 6l4-4" stroke="#e8eff6" strokeWidth="1.300" /></Glyph></Tool>
        <Caret />
        <Tool label="Изометрия" className="gap-1"><Glyph className="h-[9px] w-[9px]"><path d="M1 1l10 10M6 6l-3 5M6 0v4" /></Glyph><Caret /></Tool>
        <div className="flex items-center gap-px">
          <Tool label="Объектное отслеживание" className={`w-3 ${ON}`}><Glyph className="h-[9px] w-[9px]"><path d="M11 1L1 10h10" stroke="#e8eff6" strokeWidth="1.300" /></Glyph></Tool>
          <Tool label="Объектная привязка" className={`w-3 ${ON}`}><Glyph className="h-[9px] w-[9px]"><path d="M3 3h8v8H3zM0 1h3M1 0v3" stroke="#e8eff6" strokeWidth="1.300" /></Glyph></Tool>
        </div>
        <Caret />
        <div className="flex items-center gap-px">
          <Tool label="Аннотативные объекты" className={`w-3 ${ON}`}><Glyph className="h-2.5 w-2.5"><path d="M6 2v5l-4 4M6 7l4 4M4 6h4" stroke="#fff" strokeWidth="2" /><circle cx="9.500" cy="2" r="1.500" stroke="#fff" /></Glyph></Tool>
          <Tool label="Автомасштаб" className="w-3"><Glyph className="h-[9px] w-[9px]"><path d="M5 2v5l-4 4M5 7l4 4M3 6h4M8 3h4M10 1v4" stroke="#e1e5ea" strokeWidth="1.600" /></Glyph></Tool>
          <Tool label="Масштаб аннотаций" className="w-3"><Glyph className="h-[9px] w-[9px]"><path d="M6 2v5l-4 4M6 7l4 4M4 6h4" stroke="#e1e5ea" strokeWidth="1.800" /></Glyph></Tool>
        </div>
        <button type="button" className="flex items-center gap-0.5">1:1<Caret /></button>
        <Tool label="Рабочее пространство" className="gap-1"><Settings className="h-[9px] w-[9px]" strokeWidth={4} /><Caret /></Tool>
        <Tool label="Монитор аннотаций"><Plus className="h-2.5 w-2.5" strokeWidth={2.5} /></Tool>
        <Tool label="Изолировать объекты" className="pl-px"><Glyph className="h-[9px] w-[9px]"><path d="M1 1h5v4H1zM9 4l2.500 4h-5z" /><circle cx="5" cy="9.500" r="2" /></Glyph></Tool>
        <Tool label="Производительность" className="px-px">
          <Glyph className="h-[9px] w-[9px]">
            <path d="M1 1h5v5H1z" fill="#4a8fe0" stroke="none" />
            <path d="M6 1h5v5H6z" fill="#e8b93c" stroke="none" />
            <path d="M1 6h5v5H1z" fill="#5b87d5" stroke="none" />
            <path d="M5 8l2 3 4-5" stroke="#6cc46a" strokeWidth="2" />
          </Glyph>
        </Tool>
        <Tool label="Очистить экран" className="pr-px"><Glyph className="h-[9px] w-[9px]"><path d="M0 2h12v9H0zM3 8V5h2M9 5v3H7" strokeWidth="1.300" /></Glyph></Tool>
        <Tool label="Адаптация"><Menu className="h-2.5 w-2.5" strokeWidth={3} /></Tool>
      </div>
    </footer>
  );
}

export default function App() {
  return (
    <div className="flex min-h-screen flex-col border-x-2 border-t border-b-2 border-[#17506b] bg-[#222a35] font-['Open_Sans','Noto_Sans',sans-serif] text-[6px] leading-[10px]">
      <TitleBar />
      <RibbonTabs />
      <Ribbon />
      <FileTabs />
      <Canvas />
      <StatusBar />
    </div>
  );
}
